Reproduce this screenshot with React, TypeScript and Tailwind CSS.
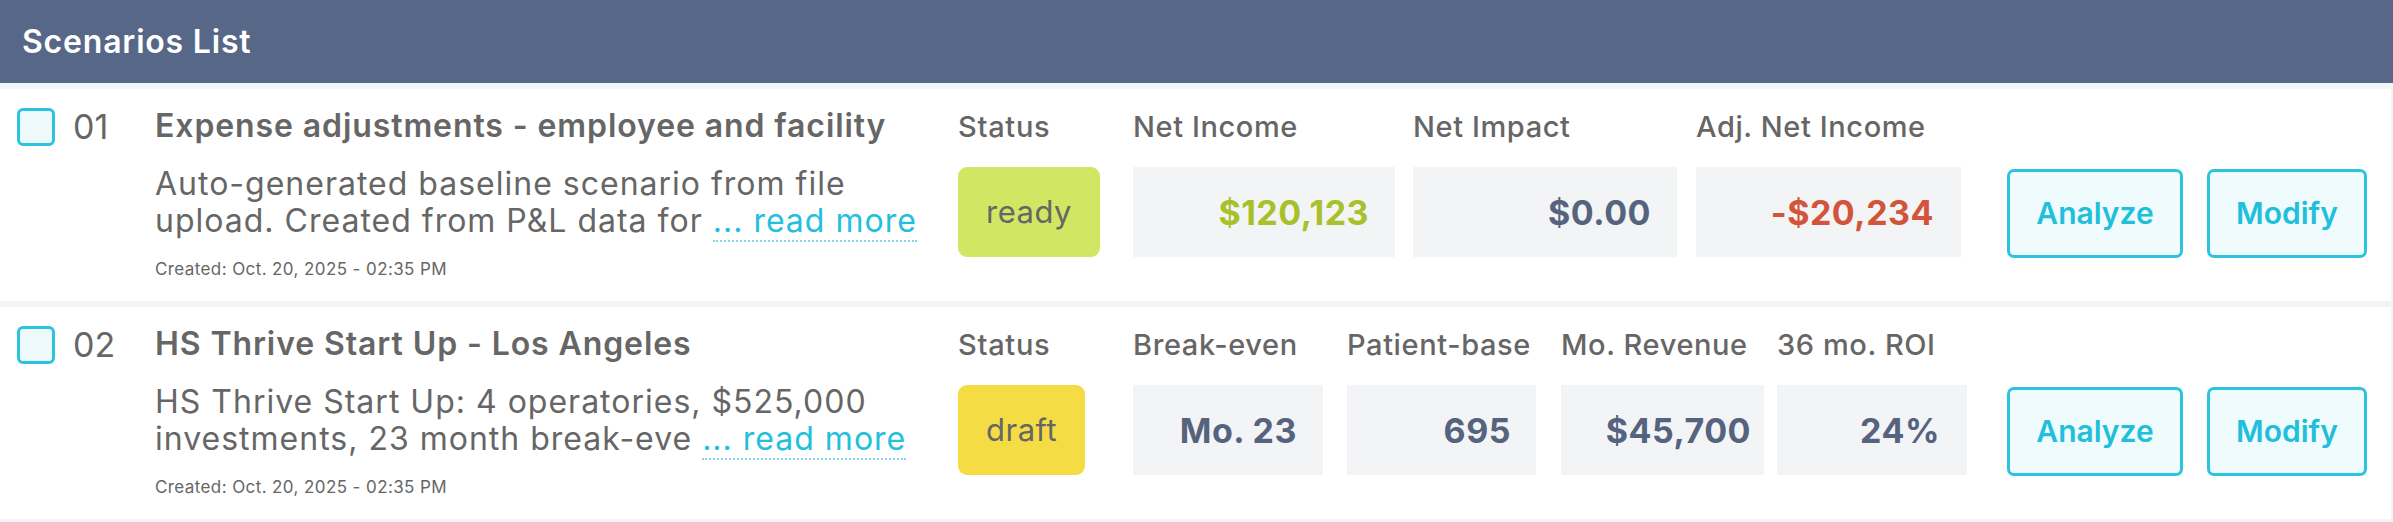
import React from "react";

type Metric = {
  label: string;
  value: string;
  color: string;
  colW: string; // column width incl. trailing gap
  boxW: string;
  pr: string;
};

type Scenario = {
  id: string;
  title: string;
  desc: string;
  created: string;
  status: "ready" | "draft";
  metrics: Metric[];
};

const scenarios: Scenario[] = [
  {
    id: "01",
    title: "Expense adjustments - employee and facility",
    desc: "Auto-generated baseline scenario from file upload. Created from P&L data for",
    created: "Created: Oct. 20, 2025 - 02:35 PM",
    status: "ready",
    metrics: [
      { label: "Net Income", value: "$120,123", color: "text-[#a8c12b]", colW: "w-[280px]", boxW: "w-[262px]", pr: "pr-[26px]" },
      { label: "Net Impact", value: "$0.00", color: "text-[#56637f]", colW: "w-[283px]", boxW: "w-[264px]", pr: "pr-[26px]" },
      { label: "Adj. Net Income", value: "-$20,234", color: "text-[#d2543a]", colW: "w-[265px]", boxW: "w-[265px]", pr: "pr-[27px]" },
    ],
  },
  {
    id: "02",
    title: "HS Thrive Start Up - Los Angeles",
    desc: "HS Thrive Start Up: 4 operatories, $525,000 investments, 23 month break-eve",
    created: "Created: Oct. 20, 2025 - 02:35 PM",
    status: "draft",
    metrics: [
      { label: "Break-even", value: "Mo. 23", color: "text-[#56637f]", colW: "w-[214px]", boxW: "w-[190px]", pr: "pr-[26px]" },
      { label: "Patient-base", value: "695", color: "text-[#56637f]", colW: "w-[214px]", boxW: "w-[189px]", pr: "pr-[25px]" },
      { label: "Mo. Revenue", value: "$45,700", color: "text-[#56637f]", colW: "w-[216px]", boxW: "w-[203px]", pr: "pr-[13px]" },
      { label: "36 mo. ROI", value: "24%", color: "text-[#56637f]", colW: "w-[190px]", boxW: "w-[190px]", pr: "pr-[27px]" },
    ],
  },
];

function StatusBadge({ status }: { status: Scenario["status"] }) {
  const bg = status === "ready" ? "bg-[#d1e662]" : "bg-[#f5dc45]";
  return (
    <div className={`${bg} h-[90px] px-[28px] rounded-[9px] flex items-center justify-center text-[31px] tracking-[0.5px] text-[#666666]`}>
      {status}
    </div>
  );
}

function ScenarioRow({ s }: { s: Scenario }) {
  return (
    <div className="bg-white h-[212px] flex items-start pt-[19px] pl-[17px]">
      {/* checkbox */}
      <div className="w-[38px] h-[38px] shrink-0 rounded-[6px] border-[3px] border-[#2cc3de] bg-[#eef9fc]" />
      <div className="ml-[18px] w-[82px] shrink-0 text-[34px] leading-[38px] text-[#666666]">{s.id}</div>

      {/* title + description */}
      <div className="w-[803px] shrink-0 pr-[20px]">
        <div className="text-[32px] leading-[36px] font-semibold tracking-[0.9px] text-[#666666] whitespace-nowrap">{s.title}</div>
        <p className="mt-[21px] text-[32px] leading-[37px] tracking-[1px] text-[#666666]">
          {s.desc}{" "}
          <a className="text-[#22c0dc] border-b-2 border-dotted border-[#86d3e3] cursor-pointer">... read more</a>
        </p>
        <div className="mt-[20px] text-[17px] leading-[20px] tracking-[0.4px] text-[#666666]">{s.created}</div>
      </div>

      {/* status */}
      <div className="w-[175px] shrink-0 flex flex-col items-start">
        <div className="mt-[1px] h-[36px] text-[29px] leading-[36px] font-medium tracking-[0.7px] text-[#666666]">Status</div>
        <div className="mt-[22px]">
          <StatusBadge status={s.status} />
        </div>
      </div>

      {/* metrics */}
      <div className="flex shrink-0">
        {s.metrics.map((m) => (
          <div key={m.label} className={`${m.colW} shrink-0`}>
            <div className="mt-[1px] h-[36px] text-[29px] leading-[36px] font-medium tracking-[0.6px] text-[#666666] whitespace-nowrap">
              {m.label}
            </div>
            <div
              className={`${m.boxW} ${m.pr} mt-[22px] h-[90px] bg-[#f3f4f6] flex items-center justify-end text-[34px] font-bold tracking-[0.5px] ${m.color}`}
            >
              {m.value}
            </div>
          </div>
        ))}
      </div>

      {/* actions */}
      <div className="ml-auto pr-[24px] mt-[61px] flex gap-[24px]">
        <button className="w-[176px] h-[89px] rounded-[7px] border-[3px] border-[#2cc3de] bg-[#effbfd] text-[30px] font-semibold text-[#22bfdb]">
          Analyze
        </button>
        <button className="w-[160px] h-[89px] rounded-[7px] border-[3px] border-[#2cc3de] bg-[#effbfd] text-[30px] font-semibold text-[#22bfdb]">
          Modify
        </button>
      </div>
    </div>
  );
}

export default function App() {
  return (
    <div className="w-[2393px] h-[522px] bg-[#f3f4f7] font-['Inter','Noto_Sans',sans-serif] overflow-hidden">
      <div className="h-[83px] bg-[#576788] flex items-center pl-[22px]">
        <h1 className="text-[32px] font-semibold tracking-[0.8px] text-white">Scenarios List</h1>
      </div>
      <div className="pt-[6px] pr-[2px] flex flex-col gap-[6px]">
        {scenarios.map((s) => (
          <ScenarioRow key={s.id} s={s} />
        ))}
      </div>
    </div>
  );
}
